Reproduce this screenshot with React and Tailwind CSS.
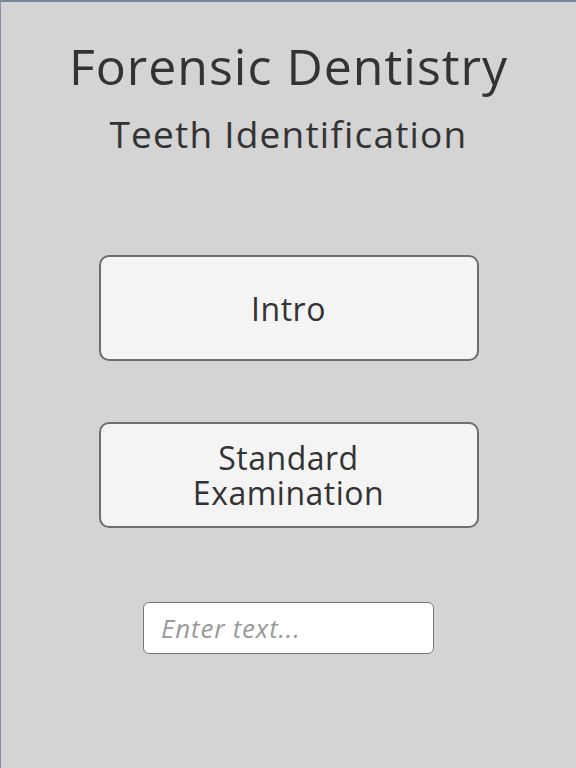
const App = () => {
  return (
    <div
      className="h-[768px] w-[576px] bg-[#d4d4d4] border-t-2 border-l border-t-[#7c859a] border-l-[#8a90a0] flex flex-col items-center text-[#333333]"
      style={{ fontFamily: '"Open Sans", "Liberation Sans", sans-serif' }}
    >
      {/* Titles */}
      <h1 className="mt-[30px] text-[50px] leading-[68px] tracking-[1px]">
        Forensic Dentistry
      </h1>
      <h2 className="mt-[12px] text-[37px] leading-[44px] tracking-[1.2px]">
        Teeth Identification
      </h2>

      {/* Menu buttons */}
      <button className="mt-[99px] w-[380px] h-[106px] shrink-0 rounded-[10px] border-2 border-[#6e6e6e] bg-[#f4f4f4] text-[32px] font-medium leading-[35px] tracking-[0.5px]">
        Intro
      </button>
      <button className="mt-[61px] w-[380px] h-[106px] shrink-0 rounded-[10px] border-2 border-[#6e6e6e] bg-[#f4f4f4] text-[32px] font-medium leading-[35px] tracking-[0.5px]">
        <span className="block">Standard</span>
        <span className="block">Examination</span>
      </button>

      {/* Text field */}
      <input
        type="text"
        placeholder="Enter text..."
        className="mt-[74px] w-[291px] h-[52px] shrink-0 rounded-[6px] border border-[#777777] bg-white px-[17px] text-[26px] italic tracking-[0.8px] placeholder:text-[#9a9a9a] outline-none"
      />
    </div>
  );
};

export default App;
